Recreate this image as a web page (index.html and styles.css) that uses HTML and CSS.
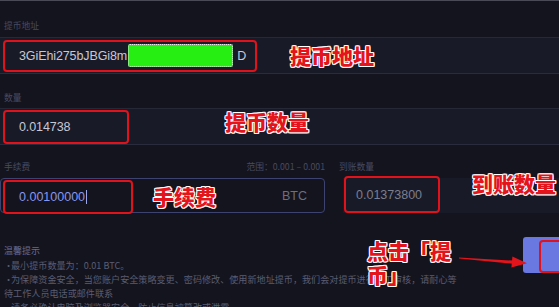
FILE: index.html
```html
<!DOCTYPE html>
<html lang="zh-CN">
<head>
<meta charset="utf-8">
<title>提币</title>
<link rel="stylesheet" href="styles.css">
</head>
<body>
<div class="page">
  <div class="label">提币地址</div>
  <div class="band">
    <div class="hl hl-addr"><span class="val">3GiEhi275bJBGi8m</span><span class="redact"></span><span class="val">D</span></div>
    <span class="note note-addr">提币地址</span>
  </div>

  <div class="label">数量</div>
  <div class="band">
    <div class="hl hl-qty"><span class="val">0.014738</span></div>
    <span class="note note-qty">提币数量</span>
  </div>

  <div class="label-row">
    <div class="fee-labels"><span>手续费</span><span>范围：0.001 – 0.001</span></div>
    <span class="recv-label">到账数量</span>
  </div>

  <div class="fee-row">
    <div class="fee-box">
      <div class="hl hl-fee"><span class="fee-val">0.00100000</span><span class="caret"></span></div>
      <span class="note note-fee">手续费</span>
      <span class="unit">BTC</span>
    </div>
    <div class="recv">
      <div class="hl hl-recv"><span class="recv-val">0.01373800</span></div>
      <span class="note note-recv">到账数量</span>
    </div>
  </div>

  <div class="bottom">
    <div class="tips">
      <div class="tips-title">温馨提示</div>
      <p class="tip"><span class="dot">•</span>最小提币数量为：0.01 BTC。</p>
      <p class="tip"><span class="dot">•</span>为保障资金安全，当您账户安全策略变更、密码修改、使用新地址提币，我们会对提币进行人工审核，请耐心等<br>待工作人员电话或邮件联系</p>
      <p class="tip"><span class="dot">•</span>请务必确认电脑及浏览器安全，防止信息被篡改或泄露。</p>
    </div>
    <div class="submit"><div class="hl hl-btn"></div></div>
  </div>

  <div class="note note-click">点击「提<br>币」</div>
  <svg class="arrow" width="76" height="22" viewBox="0 0 76 22">
    <polygon points="4,8.4 58,11.6 58,14.8 4,9.6" fill="#e3141b"/>
    <polygon points="57.4,7.6 72,14.2 56.4,18.6" fill="#e3141b"/>
  </svg>
</div>
</body>
</html>
```
FILE: styles.css
```css
* { box-sizing: border-box; }
html, body { margin: 0; padding: 0; }
body {
  background: #14141e;
  font-family: "Liberation Sans", "Noto Sans CJK SC", sans-serif;
  overflow: hidden;
}
.page {
  position: relative;
  width: 559px;
  height: 307px;
  border-top: 1px solid #4a4a56;
  overflow: hidden;
}
.label {
  padding: 18px 0 4px 4px;
  font-family: "Noto Sans CJK SC", sans-serif;
  font-size: 8.75px;
  line-height: 14px;
  color: #474a60;
}
.band + .label { padding: 17px 0 3px 4px; }
.band {
  height: 37px;
  border-top: 1px solid #262838;
  border-bottom: 1px solid #2a2c3d;
  background: #191a28;
  display: flex;
  align-items: center;
}
.hl {
  border: 2px solid #e1121a;
  border-radius: 4px;
  display: flex;
  align-items: center;
  flex-shrink: 0;
}
.hl-addr { width: 254px; height: 32px; margin-left: 3px; padding-left: 14px; }
.hl-qty { width: 126px; height: 34px; margin-left: 3px; padding-left: 14px; }
.val { font-size: 12.5px; color: #c6c8d5; letter-spacing: -0.1px; }
.redact {
  display: inline-block;
  width: 105px;
  height: 23px;
  margin: 0 4px 0 1px;
  background: #26ee12;
  border: 1px dotted #e8e8e8;
  border-radius: 2px;
}
.note {
  font-family: "Noto Sans CJK SC", sans-serif;
  font-weight: 900;
  font-size: 21px;
  line-height: 24px;
  color: #e3141b;
  text-shadow: 1px 0 #fff, -1px 0 #fff, 0 1px #fff, 0 -1px #fff,
    1px 1px #f4dede, -1px -1px #f4dede, 1px -1px #f4dede, -1px 1px #f4dede;
  white-space: nowrap;
}
.note-addr { margin-left: 33px; margin-top: -2px; }
.note-qty { margin-left: 96px; margin-top: -11px; }

.label-row {
  display: flex;
  padding: 15px 0 2px 4px;
  font-family: "Noto Sans CJK SC", sans-serif;
  font-size: 8.75px;
  line-height: 14px;
  color: #474a60;
}
.fee-labels {
  width: 321px;
  display: flex;
  justify-content: space-between;
}
.recv-label { margin-left: 14px; }

.fee-row { display: flex; height: 37px; }
.fee-box {
  width: 325px;
  height: 35px;
  margin-top: 2px;
  border: 1px solid #3d4370;
  border-radius: 4px;
  display: flex;
  align-items: center;
}
.hl-fee {
  align-self: flex-start;
  width: 130px;
  height: 34px;
  margin: 1px 0 0 2px;
  padding-left: 14px;
}
.fee-val { font-size: 12.5px; color: #8797ee; }
.caret { width: 1px; height: 14px; background: #9aa6ee; margin-left: 1px; }
.note-fee { margin-left: 20px; }
.unit { margin-left: auto; padding-right: 17px; font-size: 12.5px; color: #6c6f80; }

.recv {
  position: relative;
  flex: 1;
  height: 35px;
  margin: 2px 0 0 18px;
  background: #191a28;
  display: flex;
  align-items: flex-start;
}
.hl-recv { width: 96px; height: 37px; margin: -2px 0 0 1px; padding-left: 10px; }
.recv-val { font-size: 12.5px; color: #7b7e8e; }
.note-recv { position: absolute; left: 129px; top: -7px; }

.bottom { display: flex; margin-top: 24px; }
.tips {
  flex: 0 0 523px;
  padding: 7px 0 0 4px;
}
.tips-title {
  font-family: "Noto Sans CJK SC", sans-serif;
  font-size: 9px;
  line-height: 14px;
  color: #656b98;
}
.tip {
  margin: 0;
  white-space: nowrap;
  font-family: "Noto Sans CJK SC", sans-serif;
  font-size: 9.1px;
  line-height: 14px;
  color: #5a5d72;
}
.dot { display: inline-block; width: 7px; }
.submit {
  flex: 0 0 60px;
  height: 36px;
  background: #6a78e2;
  border-radius: 3px;
  display: flex;
  align-items: flex-start;
}
.hl-btn { width: 40px; height: 33px; margin: 3px 0 0 16px; }

.note-click { position: absolute; left: 367px; top: 237px; }
.arrow { position: absolute; left: 455px; top: 248px; }
```
